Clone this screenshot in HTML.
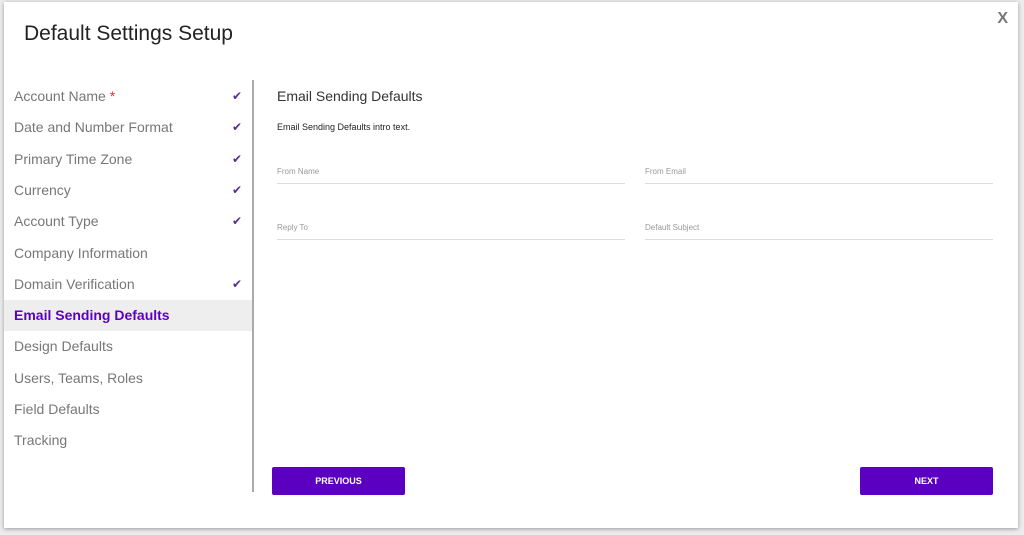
<!DOCTYPE html><html><head><style>
body{margin:0;width:1024px;height:535px;background:#ececef;font-family:"Liberation Sans",sans-serif;position:relative;overflow:hidden}
.m{position:absolute;left:4px;top:2px;width:1014px;height:526px;background:#fff;box-shadow:0 1px 4px rgba(0,0,0,.35)}
.t{position:absolute;left:20px;top:20px;font-size:21px;color:#222}
.x{position:absolute;right:10px;top:8px;font-size:16px;font-weight:bold;color:#777}
.it{position:absolute;left:0;width:248px;height:31px;line-height:31px;padding-left:10px;box-sizing:border-box;font-size:14px;color:#777}
.it .c{position:absolute;right:10px;top:0;color:#5a2d91;font-size:12px}
.a{background:#eee;color:#5b00c0;font-weight:bold}
.d{position:absolute;left:248px;top:78px;width:2px;height:412px;background:#aaa}
.h{position:absolute;left:273px;top:86px;font-size:14px;color:#333}
.p{position:absolute;left:273px;top:120px;font-size:9px;color:#222}
.f{position:absolute;width:348px;border-bottom:1px solid #ddd;height:16px;font-size:8px;color:#999}
.b{position:absolute;top:465px;width:133px;height:28px;background:#5b00c0;color:#fff;font-size:9px;font-weight:bold;text-align:center;line-height:28px;border-radius:2px}
</style></head><body>
<div class="m">
<div class="t">Default Settings Setup</div>
<div class="x">X</div>
<div class="it" style="top:79px">Account Name <span style="color:#e33">*</span><span class="c">✔</span></div>
<div class="it" style="top:110px">Date and Number Format<span class="c">✔</span></div>
<div class="it" style="top:142px">Primary Time Zone<span class="c">✔</span></div>
<div class="it" style="top:173px">Currency<span class="c">✔</span></div>
<div class="it" style="top:204px">Account Type<span class="c">✔</span></div>
<div class="it" style="top:236px">Company Information</div>
<div class="it" style="top:267px">Domain Verification<span class="c">✔</span></div>
<div class="it a" style="top:298px">Email Sending Defaults</div>
<div class="it" style="top:329px">Design Defaults</div>
<div class="it" style="top:361px">Users, Teams, Roles</div>
<div class="it" style="top:392px">Field Defaults</div>
<div class="it" style="top:423px">Tracking</div>
<div class="d"></div>
<div class="h">Email Sending Defaults</div>
<div class="p">Email Sending Defaults intro text.</div>
<div class="f" style="left:273px;top:165px">From Name</div>
<div class="f" style="left:641px;top:165px">From Email</div>
<div class="f" style="left:273px;top:221px">Reply To</div>
<div class="f" style="left:641px;top:221px">Default Subject</div>
<div class="b" style="left:268px">PREVIOUS</div>
<div class="b" style="left:856px">NEXT</div>
</div>
</body></html>
